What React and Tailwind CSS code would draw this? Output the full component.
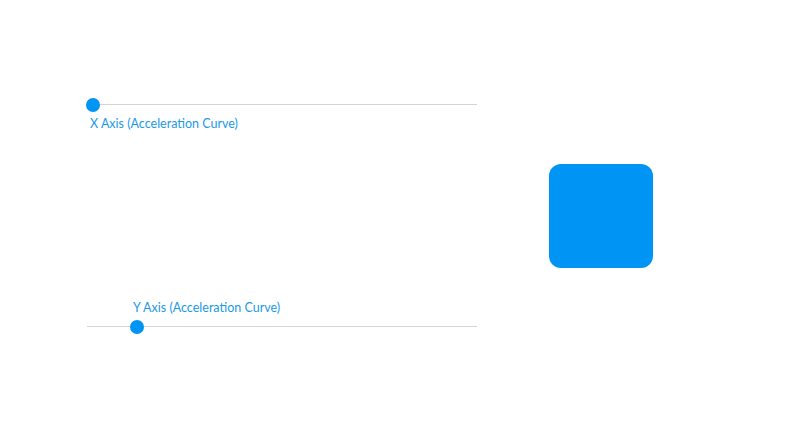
import React from "react";

function Slider({ value }) {
	return (
		<div className="relative h-[14px] w-[390px]">
			<div className="absolute left-0 right-0 top-[6px] h-px bg-[#d4d4d4]" />
			<div
				className="absolute top-0 h-[14px] w-[14px] rounded-full bg-[#0094f4]"
				style={{ left: value }}
			/>
		</div>
	);
}

export default function App() {
	return (
		<div className="flex h-[432px] w-[800px] items-center bg-white font-['Lato',sans-serif]">
			<div className="ml-[87px] flex w-[390px] flex-col">
				<Slider value={-1} />
				<div className="mt-[4px] ml-[3px] text-[12.5px] leading-4 text-[#1b9ae4]">X Axis (Acceleration Curve)</div>
				<div className="mt-[168px] ml-[46px] text-[12.5px] leading-4 text-[#1b9ae4]">Y Axis (Acceleration Curve)</div>
				<div className="mt-[4px]">
					<Slider value={43} />
				</div>
			</div>
			<div className="ml-[72px] h-[104px] w-[104px] rounded-[12px] bg-[#0094f4]" />
		</div>
	);
}
